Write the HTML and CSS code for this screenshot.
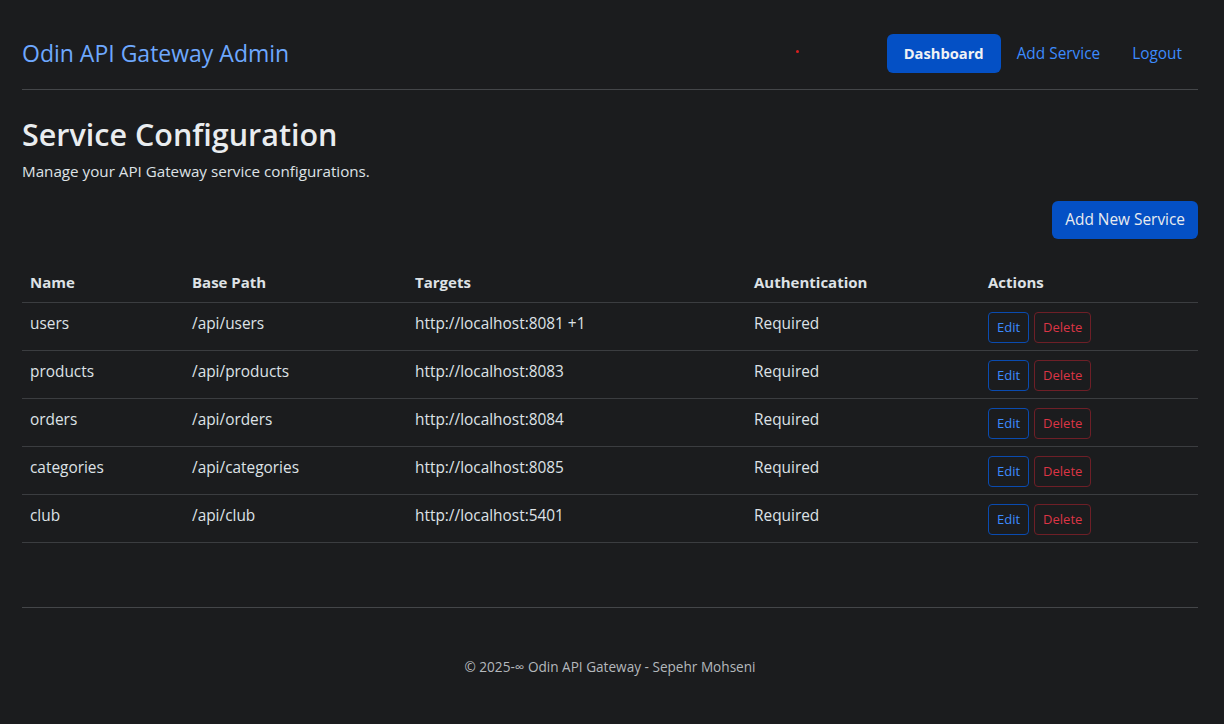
FILE: index.html
```html
<!DOCTYPE html>
<html lang="en">
<head>
<meta charset="utf-8">
<title>Odin API Gateway Admin</title>
<link rel="stylesheet" href="styles.css">
</head>
<body>
<div class="container">
  <header class="header">
    <a class="brand" href="#">Odin API Gateway Admin</a>
    <span class="dot"></span>
    <nav class="nav">
      <a class="nav-link active" href="#">Dashboard</a>
      <a class="nav-link" href="#">Add Service</a>
      <a class="nav-link" href="#">Logout</a>
    </nav>
  </header>

  <main>
    <h1 class="title">Service Configuration</h1>
    <p class="lead">Manage your API Gateway service configurations.</p>
    <div class="toolbar">
      <a class="btn btn-primary" href="#">Add New Service</a>
    </div>
    <table class="table">
      <colgroup>
        <col class="c-name"><col class="c-path"><col class="c-targets"><col class="c-auth"><col class="c-actions">
      </colgroup>
      <thead>
        <tr><th>Name</th><th>Base Path</th><th>Targets</th><th>Authentication</th><th>Actions</th></tr>
      </thead>
      <tbody>
        <tr><td>users</td><td>/api/users</td><td>http://localhost:8081 +1</td><td>Required</td><td class="actions"><a class="btn-sm edit" href="#">Edit</a><a class="btn-sm del" href="#">Delete</a></td></tr>
        <tr><td>products</td><td>/api/products</td><td>http://localhost:8083</td><td>Required</td><td class="actions"><a class="btn-sm edit" href="#">Edit</a><a class="btn-sm del" href="#">Delete</a></td></tr>
        <tr><td>orders</td><td>/api/orders</td><td>http://localhost:8084</td><td>Required</td><td class="actions"><a class="btn-sm edit" href="#">Edit</a><a class="btn-sm del" href="#">Delete</a></td></tr>
        <tr><td>categories</td><td>/api/categories</td><td>http://localhost:8085</td><td>Required</td><td class="actions"><a class="btn-sm edit" href="#">Edit</a><a class="btn-sm del" href="#">Delete</a></td></tr>
        <tr><td>club</td><td>/api/club</td><td>http://localhost:5401</td><td>Required</td><td class="actions"><a class="btn-sm edit" href="#">Edit</a><a class="btn-sm del" href="#">Delete</a></td></tr>
      </tbody>
    </table>
  </main>

  <footer class="footer">© 2025-∞ Odin API Gateway - Sepehr Mohseni</footer>
</div>
</body>
</html>
```
FILE: styles.css
```css
* { box-sizing: border-box; }
html, body {
  margin: 0;
  background: #1b1c1e;
  color: #dee2e6;
  font-family: "Open Sans", "Noto Sans", sans-serif;
  font-size: 16px;
  line-height: 1.5;
}
a { text-decoration: none; }
.container {
  padding: 0 26px 0 22px;
}
.header {
  display: flex;
  align-items: center;
  height: 90px;
  padding-top: 18px;
  border-bottom: 1px solid #444649;
}
.brand {
  color: #6ea8fe;
  font-size: 23px;
  flex: 1;
}
.dot {
  width: 3px;
  height: 3px;
  border-radius: 50%;
  background: #dc1f1f;
  margin-right: 88px;
  margin-top: -4px;
}
.nav {
  display: flex;
  align-items: center;
}
.nav-link {
  color: #3d8bfd;
  font-size: 15.4px;
  line-height: 39px;
  padding: 0 16px;
  border-radius: 6px;
}
.nav-link.active {
  background: #0450c5;
  color: #f0f2f5;
  font-weight: 700;
  font-size: 14.7px;
  padding: 0 17px;
}
.title {
  margin: 26px 0 0;
  font-size: 30.5px;
  font-weight: 600;
  line-height: 1.2;
  color: #e9ecef;
}
.lead {
  margin: 7px 0 0;
  font-size: 15.2px;
}
.toolbar {
  display: flex;
  justify-content: flex-end;
  margin-top: 19px;
}
.btn {
  display: inline-block;
  font-size: 15.4px;
  line-height: 24px;
  padding: 7px 13px;
  border-radius: 6px;
}
.btn-primary {
  background: #0450c5;
  color: #e9ecef;
}
.table {
  width: 100%;
  border-collapse: collapse;
  margin-top: 22px;
  table-layout: fixed;
}
.c-name { width: 162px; }
.c-path { width: 223px; }
.c-targets { width: 339px; }
.c-auth { width: 234px; }
.table th, .table td {
  text-align: left;
  padding: 0 8px;
  border-bottom: 1px solid #3b3d40;
  vertical-align: middle;
}
.table th {
  font-weight: 700;
  height: 41px;
  padding-top: 2px;
  font-size: 15px;
}
.table td {
  height: 48px;
  font-size: 15.4px;
  padding-bottom: 6px;
}
.table td.actions {
  padding-bottom: 0;
  padding-top: 2px;
}
.btn-sm {
  display: inline-block;
  font-size: 13px;
  line-height: 1.5;
  padding: 5px 8px;
  border-radius: 4px;
  margin-right: 5px;
}
.edit {
  color: #3d8bfd;
  border: 1px solid #0a4bb0;
}
.del {
  color: #dc3545;
  border: 1px solid #6e1f27;
}
.footer {
  margin-top: 64px;
  border-top: 1px solid #444649;
  text-align: center;
  font-size: 13.6px;
  color: #b4b8bc;
  padding-top: 49px;
  padding-bottom: 40px;
}
```
